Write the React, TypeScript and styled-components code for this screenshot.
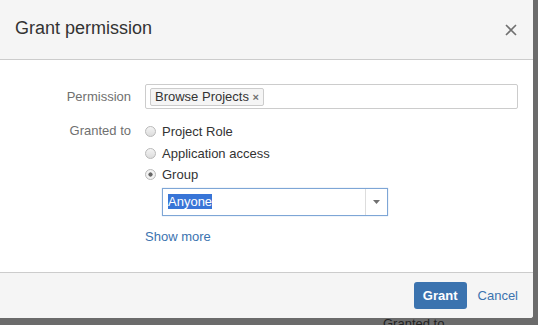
import React from "react";
import styled, {createGlobalStyle} from "styled-components";

const GlobalStyle = createGlobalStyle`
  html, body {
    margin: 0;
    padding: 0;
    background: #6b6b6b;
    font-family: "Liberation Sans", Arial, sans-serif;
    overflow: hidden;
  }
`

const App: React.FC = () => {
    return (
        <Page>
            <GlobalStyle/>
            <Dialog>
                <Header>
                    <Title>Grant permission</Title>
                    <CloseButton aria-label="Close">
                        <svg width="12" height="12" viewBox="0 0 12 12">
                            <path d="M1 1 L11 11 M11 1 L1 11" stroke="#707070" strokeWidth="1.6"/>
                        </svg>
                    </CloseButton>
                </Header>
                <Body>
                    <FieldRow>
                        <Label lineHeight={25}>Permission</Label>
                        <TagInput>
                            <Tag>Browse Projects <TagRemove>×</TagRemove></Tag>
                        </TagInput>
                    </FieldRow>
                    <FieldRow>
                        <Label lineHeight={20}>Granted to</Label>
                        <RadioList>
                            <RadioRow>
                                <Radio/>
                                <RadioLabel>Project Role</RadioLabel>
                            </RadioRow>
                            <RadioRow>
                                <Radio/>
                                <RadioLabel>Application access</RadioLabel>
                            </RadioRow>
                            <RadioRow>
                                <Radio checked/>
                                <RadioLabel>Group</RadioLabel>
                            </RadioRow>
                            <Select>
                                <SelectValue><Selected>Anyone</Selected></SelectValue>
                                <SelectArrow>
                                    <svg width="7" height="4" viewBox="0 0 7 4">
                                        <path d="M0 0 L7 0 L3.5 4 Z" fill="#707070"/>
                                    </svg>
                                </SelectArrow>
                            </Select>
                            <ShowMore>Show more</ShowMore>
                        </RadioList>
                    </FieldRow>
                </Body>
                <Footer>
                    <PrimaryButton>Grant</PrimaryButton>
                    <LinkButton>Cancel</LinkButton>
                </Footer>
            </Dialog>
            <Behind>Granted to</Behind>
        </Page>
    )
}

const Page = styled.div`
  position: relative;
  width: 538px;
  height: 325px;
  overflow: hidden;
  background: #6b6b6b;
`
const Dialog = styled.div`
  width: 533px;
  height: 318px;
  background: #fff;
  display: flex;
  flex-direction: column;
  border-bottom-right-radius: 3px;
`
const Header = styled.div`
  height: 60px;
  box-sizing: border-box;
  background: #f5f5f5;
  border-bottom: 1px solid #cccccc;
  display: flex;
  align-items: center;
  justify-content: space-between;
  padding: 0 16px 0 15px;
`
const Title = styled.h2`
  margin: 0;
  font-size: 18px;
  font-weight: normal;
  color: #333;
  padding-bottom: 2px;
`
const CloseButton = styled.span`
  display: flex;
  padding-top: 1px;
`
const Body = styled.div`
  flex: 1;
  padding: 24px 15px 0 0;
  display: flex;
  flex-direction: column;
  gap: 12px;
`
const FieldRow = styled.div`
  display: flex;
  align-items: flex-start;
  gap: 14px;
`
const Label = styled.div<{lineHeight: number}>`
  width: 131px;
  text-align: right;
  font-size: 13px;
  color: #707070;
  line-height: ${p => p.lineHeight}px;
`
const TagInput = styled.div`
  flex: 1;
  height: 25px;
  box-sizing: border-box;
  border: 1px solid #cccccc;
  border-radius: 2px;
  display: flex;
  align-items: center;
  padding-left: 4px;
`
const Tag = styled.span`
  font-size: 13px;
  color: #333;
  background: #f5f5f5;
  border: 1px solid #cccccc;
  border-radius: 2px;
  padding: 0 4px 0 4px;
  line-height: 15px;
`
const TagRemove = styled.span`
  font-size: 11px;
  color: #707070;
  font-weight: bold;
`
const RadioList = styled.div`
  display: flex;
  flex-direction: column;
`
const RadioRow = styled.div`
  display: flex;
  align-items: center;
  height: 21.5px;
  gap: 6px;
  padding-left: 0;
`
const Radio = styled.span<{checked?: boolean}>`
  width: 9px;
  height: 9px;
  border-radius: 50%;
  border: 1px solid #b9b9b9;
  background: ${p => p.checked
    ? "radial-gradient(circle, #666 0 1.8px, #f2f2f2 2.4px)"
    : "linear-gradient(#f4f4f4, #dcdcdc)"};
`
const RadioLabel = styled.span`
  font-size: 13px;
  color: #333;
`
const Select = styled.div`
  margin: 2px 0 0 17px;
  width: 226px;
  height: 28px;
  box-sizing: border-box;
  border: 1px solid #7ea6d6;
  box-shadow: 0 0 1px #a8c4e6;
  display: flex;
  align-items: stretch;
`
const SelectValue = styled.div`
  flex: 1;
  display: flex;
  align-items: center;
  padding-left: 5px;
  font-size: 13px;
`
const Selected = styled.span`
  background: #3875d7;
  color: #fff;
  line-height: 15px;
`
const SelectArrow = styled.div`
  width: 21px;
  border-left: 1px solid #dddddd;
  display: flex;
  align-items: center;
  justify-content: center;
`
const ShowMore = styled.a`
  margin-top: 13px;
  font-size: 13px;
  color: #3b73af;
`
const Footer = styled.div`
  height: 46px;
  box-sizing: border-box;
  background: #f5f5f5;
  border-top: 1px solid #cccccc;
  display: flex;
  align-items: center;
  justify-content: flex-end;
  padding: 0 15px 0 0;
  gap: 11px;
  border-bottom-right-radius: 3px;
`
const PrimaryButton = styled.button`
  font-family: inherit;
  font-size: 13px;
  font-weight: bold;
  color: #fff;
  background: #3b73af;
  border: none;
  border-radius: 3px;
  height: 27px;
  padding: 0 9px;
`
const LinkButton = styled.span`
  font-size: 13px;
  color: #3b73af;
`
const Behind = styled.div`
  position: absolute;
  left: 383px;
  top: 316px;
  font-size: 13px;
  color: #222;
`
export default App
